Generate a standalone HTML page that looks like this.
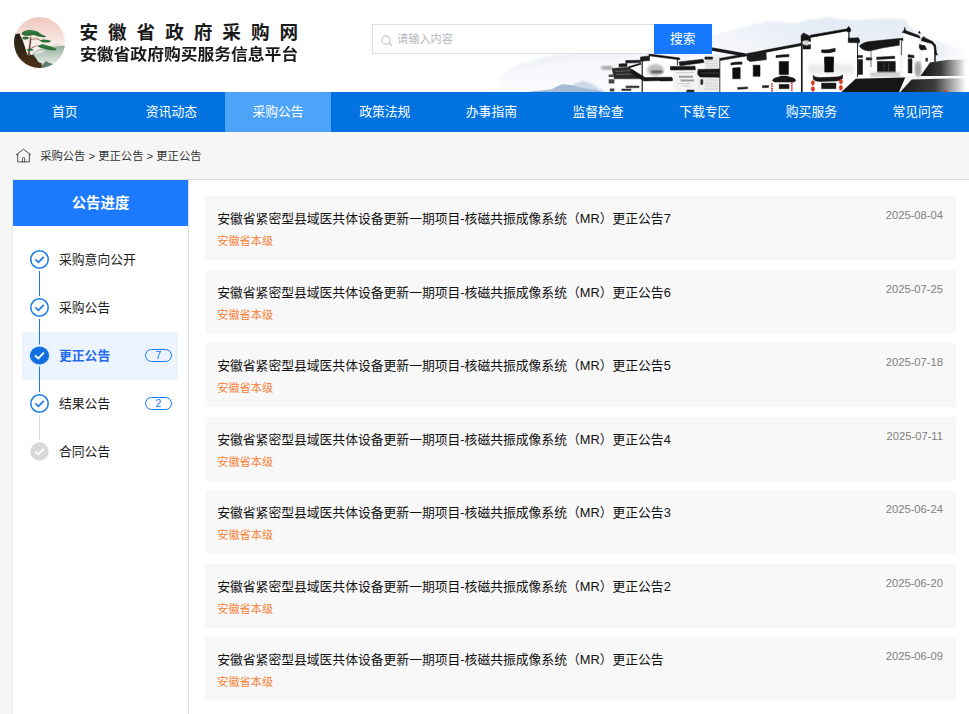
<!DOCTYPE html>
<html lang="zh-CN">
<head>
<meta charset="utf-8">
<title>安徽省政府采购网</title>
<style>
*{box-sizing:border-box;margin:0;padding:0}
html,body{width:969px;height:714px;overflow:hidden;background:#f6f6f6}
body{position:relative;font-family:"Liberation Sans","Noto Sans CJK SC",sans-serif;color:#1a1a1a;-webkit-font-smoothing:antialiased}
.abs{position:absolute}
#header{position:absolute;left:0;top:0;width:969px;height:92px;background:#fff;overflow:hidden}
#t1{position:absolute;left:79.4px;top:20px;font-size:18.6px;font-weight:700;letter-spacing:10px;line-height:26px;color:#1a1a1a;white-space:nowrap}
#t2{transform:scaleY(0.935);transform-origin:0 50%;position:absolute;left:80px;top:43.8px;font-size:16.8px;font-weight:700;line-height:22px;color:#1a1a1a;white-space:nowrap}
#search{position:absolute;left:372px;top:24px;width:283px;height:30px;border:1px solid #dcdfe6;background:#fff;border-right:none}
#search .ph{position:absolute;left:24px;top:0;line-height:28px;font-size:11.2px;color:#b4b8bf}
#sbtn{position:absolute;left:654px;top:24px;width:57.5px;height:30px;background:#1677ff;color:#fff;font-size:12.8px;line-height:29.5px;text-align:center}
#nav{position:absolute;left:0;top:92px;width:969px;height:40px;background:#0073e0}
#nav .it{position:absolute;top:0;height:40px;width:106.67px;line-height:39px;text-align:center;color:#fff;font-size:12.8px}
#nav .it.on{background:#4da3f7}
#crumb{position:absolute;left:40.2px;top:146.4px;font-size:11.3px;line-height:20px;color:#333;white-space:nowrap}
#side{position:absolute;left:12px;top:179px;width:177px;height:540px;background:#fff;border:1px solid #ebe6df;border-right:1px solid #dcdcdc}
#side .hd{position:absolute;left:0;top:0;width:175px;height:46px;background:#1b7aff;color:#fff;font-weight:700;font-size:14.4px;line-height:46px;text-align:center}
#main{position:absolute;left:189px;top:179px;width:780px;height:540px;background:#fff;border-top:1px solid #dcdcdc}
.step{position:absolute;left:0;width:175px;height:48px}
.step .tx{position:absolute;left:46px;top:0;line-height:48px;font-size:12.8px;color:#1a1a1a;white-space:nowrap}
.step svg{position:absolute;left:17px;top:14.3px}
.badge{position:absolute;left:132px;top:17px;width:27px;height:13px;border:1px solid #1677ff;border-radius:7px;color:#1677ff;font-size:10.4px;line-height:11px;text-align:center}
.row{position:absolute;left:16.2px;width:750.8px;height:64px;background:#f8f8f8}
.row .tt{position:absolute;left:12px;top:13.5px;font-size:12.8px;line-height:18px;color:#111;white-space:nowrap}
.row .rg{position:absolute;left:12px;top:37.7px;font-size:11.2px;line-height:14px;color:#f97f36;white-space:nowrap}
.row .dt{position:absolute;right:13px;top:12px;font-size:11.2px;line-height:14px;color:#808080;white-space:nowrap}
</style>
</head>
<body>
<div id="header">
  <svg class="abs" style="left:480px;top:0" width="489" height="92" viewBox="480 0 489 92">
    <defs>
      <linearGradient id="mtA" x1="0" y1="0" x2="0" y2="1"><stop offset="0" stop-color="#e3eaf4"/><stop offset="0.45" stop-color="#edf1f7"/><stop offset="1" stop-color="#f8fafc"/></linearGradient>
      <linearGradient id="mtB" x1="0" y1="0" x2="0" y2="1"><stop offset="0" stop-color="#e9eef5"/><stop offset="0.7" stop-color="#f3f6fa"/><stop offset="1" stop-color="#fbfcfd"/></linearGradient>
      <linearGradient id="fadeR" x1="0" y1="0" x2="1" y2="0"><stop offset="0" stop-color="#fff" stop-opacity="0"/><stop offset="1" stop-color="#fff" stop-opacity="1"/></linearGradient>
      <linearGradient id="fadeL" x1="0" y1="0" x2="1" y2="0"><stop offset="0" stop-color="#fff" stop-opacity="0.6"/><stop offset="1" stop-color="#fff" stop-opacity="0"/></linearGradient>
      <linearGradient id="rfR" gradientUnits="userSpaceOnUse" x1="920" y1="0" x2="966" y2="0"><stop offset="0" stop-color="#151515"/><stop offset="0.45" stop-color="#3a3a3a"/><stop offset="0.8" stop-color="#b5b5b5"/><stop offset="1" stop-color="#ffffff"/></linearGradient>
      <linearGradient id="rfR2" gradientUnits="userSpaceOnUse" x1="903" y1="0" x2="966" y2="0"><stop offset="0" stop-color="#1d1d1d"/><stop offset="0.5" stop-color="#3c3c3c"/><stop offset="0.85" stop-color="#c4c4c4"/><stop offset="1" stop-color="#ffffff"/></linearGradient>
      <filter id="b1" x="-5%" y="-20%" width="110%" height="140%"><feGaussianBlur stdDeviation="1.6"/></filter>
      <filter id="b2" x="-5%" y="-20%" width="110%" height="140%"><feGaussianBlur stdDeviation="0.8"/></filter>
      <filter id="b3" x="-2%" y="-5%" width="104%" height="110%"><feTurbulence type="fractalNoise" baseFrequency="0.8" numOctaves="2" seed="4" result="n"/><feDisplacementMap in="SourceGraphic" in2="n" scale="1.3" xChannelSelector="R" yChannelSelector="G"/><feGaussianBlur stdDeviation="0.3"/></filter>
    </defs>
    <!-- mist / mountains -->
    <path d="M500 76 L512 68 L523 63.5 L543 57.4 L556 54.3 L580 52 L620 50 L660 48 L700 44 L712 36 L726 31.5 L740 28 L756 24 L769 21 L783 22.6 L795 23.6 L807 20 L820 18.7 L828 17 L838 19.3 L857 20.6 L869 19.3 L888 18.5 L904 19 L909 25.5 L919 34 L934 40 L947 44.5 L962 49.5 L967 60 L967 92 L500 92 Z" fill="url(#mtA)" filter="url(#b2)"/>
    <path d="M480 92 L500 80 L520 70 L560 62 L640 56 L720 56 L720 92 Z" fill="#fbfcfe" opacity="0.55" filter="url(#b1)"/>
    <path d="M566 92 L574 84 L584 80.5 L592 84 L600 89 L606 92 Z" fill="#cdd8e7" filter="url(#b2)"/>
    <path d="M527 92 L540 90.4 L551.5 89.2 L557 86.6 L562 84.2 L567 84.4 L572 85.2 L579 87 L585 88.4 L595 89.6 L604 92 Z" fill="#a8bbd4" filter="url(#b3)"/>
    <rect x="940" y="10" width="29" height="82" fill="url(#fadeR)"/>
    <rect x="690" y="10" width="120" height="60" fill="url(#fadeL)"/>
    <g filter="url(#b3)">
      <!-- far-left small house -->
      <path d="M601 66.4 L612 66 L612 69.6 L602 69.4 Z" fill="#9a9a9a" filter="url(#b2)"/>
      <path d="M614.4 79 L643 79 L643 92 L614.4 92 Z" fill="#fff"/>
      <path d="M612 68.4 L628.6 67.2 L644.5 78.8 L614.4 78.8 Z" fill="#2b2b2b" stroke="#2b2b2b" stroke-width="0.55" stroke-linejoin="round"/>
      <path d="M615 71.5 L630 70.6 M616 74.6 L634 73.8" stroke="#6b6b6b" stroke-width="0.8" fill="none"/>
      <path d="M608.7 74.6 H613.8 V77 H608.7 Z M608.7 79.2 H614.4 V83.6 H608.7 Z M609.8 88.6 H614.4 V91.4 H609.8 Z" fill="#4a4a4a"/>
      <path d="M626 86 H639 V87.8 H626 Z M621.8 89 H631 V90.6 H621.8 Z" fill="#333" stroke="#333" stroke-width="0.55" stroke-linejoin="round"/>
      <path d="M619 64 L627 63.6 L627 66.4 L619 66.8 Z M625.8 60.6 L640.5 60.2 L640.5 62.6 L625.8 63 Z" fill="#1c1c1c" stroke="#1c1c1c" stroke-width="0.55" stroke-linejoin="round"/>
      <path d="M628.6 67.4 L641 63.6" stroke="#1c1c1c" stroke-width="1.8"/>
      <!-- stepped gable house -->
      <path d="M642.4 61 L649.4 55.4 L677.6 58.8 L677.6 79 L644.5 79 L642.4 76 Z" fill="#fff"/>
      <path d="M640.5 57 L649.6 56 L649.6 60.6 L640.5 61.2 Z" fill="#1a1a1a" stroke="#1a1a1a" stroke-width="0.55" stroke-linejoin="round"/>
      <path d="M649 54 L679.8 58 L679.6 59.8 L649 55.8 Z" fill="#111" stroke="#111" stroke-width="0.55" stroke-linejoin="round"/>
      <path d="M642.2 61 V92" stroke="#1c1c1c" stroke-width="1.2"/>
      <ellipse cx="655.5" cy="70" rx="8.5" ry="6" fill="#bdbdbd" filter="url(#b2)"/>
      <path d="M651.3 70.6 H662.6 V72.9 H651.3 Z" fill="#3a3a3a" filter="url(#b2)"/>
      <path d="M643.3 81 H673 V92 H643.3 Z" fill="#fff"/>
      <path d="M632 69.6 L645 77.6 L671.8 77.2 L671.8 80.2 L644 81 L630.6 72.6 Z" fill="#151515" stroke="#151515" stroke-width="0.55" stroke-linejoin="round"/>
      <!-- middle low roofs -->
      <path d="M673 70 H697 V92 H673 Z" fill="#f3f3f3"/>
      <path d="M704.5 55 H720.3 V92 H697 V69 H704.5 Z" fill="#ececec"/>
      <path d="M677.4 58 V65" stroke="#222" stroke-width="1"/>
      <path d="M679 62 L703 59.2 L704.2 62.4 L680 65.8 Z" fill="#161616" stroke="#161616" stroke-width="0.55" stroke-linejoin="round"/>
      <path d="M670.3 66.4 L695 66.2 L695.4 69.8 L670.6 70 Z" fill="#161616" stroke="#161616" stroke-width="0.55" stroke-linejoin="round"/>
      <path d="M679 75.8 H693 V77.8 H679 Z M680.6 79.6 H694 V81.4 H680.6 Z" fill="#9b9b9b"/>
      <path d="M676 72.6 H694 M677 83.6 H690 M682 86 H690" stroke="#c4c4c4" stroke-width="0.8" fill="none"/>
      <path d="M686.8 90 H694 V92 H686.8 Z" fill="#2c2c2c" stroke="#2c2c2c" stroke-width="0.55" stroke-linejoin="round"/>
      <path d="M704.9 57 H712.6 V59.2 H704.9 Z" fill="#1d1d1d" stroke="#1d1d1d" stroke-width="0.55" stroke-linejoin="round"/>
      <path d="M698.2 69.4 L719.9 69 L719.9 77.2 L700 77 L697.6 74 Z" fill="#171717" stroke="#171717" stroke-width="0.55" stroke-linejoin="round"/>
      <path d="M701 73 H719" stroke="#4e4e4e" stroke-width="0.7"/>
      <path d="M700.8 79.7 H702.8 V84.4 H700.8 Z" fill="#222" stroke="#222" stroke-width="0.55" stroke-linejoin="round"/>
      <path d="M706 61 H718 M705 63.6 H718 M706 66 H718 M706 80 H718 M705 83 H718 M706 86 H718 M704 89 H718" stroke="#cdcdcd" stroke-width="0.9" fill="none"/>
      <path d="M660 78.4 L672.4 78.2 L672.4 80.8 L660 81 Z" fill="#151515" stroke="#151515" stroke-width="0.55" stroke-linejoin="round"/>
      <!-- three-window house -->
      <path d="M720.3 59.6 L747 55.3 L801.5 45.4 L801.5 92 L720.3 92 Z" fill="#fff"/>
      <path d="M712.3 47.8 L744.8 53.6 L744.4 56.2 L712 50.4 Z" fill="#141414" stroke="#141414" stroke-width="0.55" stroke-linejoin="round"/>
      <path d="M719.6 58.4 L748 53.4 L801.6 43.2 L802 45.4 L748.4 55.6 L720 60.6 Z" fill="#141414" stroke="#141414" stroke-width="0.55" stroke-linejoin="round"/>
      <path d="M747 54 L766 52.6 L766.4 59.6 L750 61.6 L747 59.4 Z" fill="#1c1c1c" stroke="#1c1c1c" stroke-width="0.55" stroke-linejoin="round"/>
      <path d="M719.8 60 V92" stroke="#333" stroke-width="0.9"/>
      <path d="M730.9 63 Q736 61.6 742 62 L742 64.2 Q736 64 730.9 65 Z" fill="#161616" stroke="#161616" stroke-width="0.55" stroke-linejoin="round"/>
      <path d="M732.7 68 L740.2 67.4 L740.2 78.8 L732.7 78.8 Z" fill="#111" stroke="#111" stroke-width="0.55" stroke-linejoin="round"/>
      <path d="M753.2 65.2 H760 V76.3 H753.2 Z" fill="#111" stroke="#111" stroke-width="0.55" stroke-linejoin="round"/>
      <path d="M776 55.6 Q783 54.6 789 54.6 L789 56.8 Q783 57 776 57.6 Z" fill="#161616" stroke="#161616" stroke-width="0.55" stroke-linejoin="round"/>
      <path d="M779.2 61.5 H788.5 V74.5 H779.2 Z" fill="#111" stroke="#111" stroke-width="0.55" stroke-linejoin="round"/>
      <path d="M772.4 80.4 Q774 77.4 778 77.2 L781 76 L787 76 L790 77.2 Q794.4 77.4 795.9 80.4 L794 82 L774.4 82 Z" fill="#141414" stroke="#141414" stroke-width="0.55" stroke-linejoin="round"/>
      <path d="M779.2 84.4 H789 V88.7 H779.2 Z" fill="#161616" stroke="#161616" stroke-width="0.55" stroke-linejoin="round"/>
      <path d="M772 83.2 V91.4 M791.8 82.6 V91.4" stroke="#d8352b" stroke-width="1.7" stroke-dasharray="1.6 0.7"/>
      <path d="M737.7 87.5 L747.6 86.9 L747.6 88.7 L737.7 89.3 Z M762.4 85.8 L768.6 85.5 L768.6 87.4 L762.4 87.8 Z" fill="#222" stroke="#222" stroke-width="0.55" stroke-linejoin="round"/>
      <!-- main tall house -->
      <path d="M802.4 42 L810.5 37 L849 30.4 L849 41 L857.6 41 L857.6 92 L802.4 92 Z" fill="#fff"/>
      <path d="M801.2 35.2 L803.4 33 L810.5 36.4 L810.5 41.6 L801.2 40.6 Z M803 44.7 H810.5 V49 H803 Z" fill="#161616" stroke="#161616" stroke-width="0.55" stroke-linejoin="round"/>
      <path d="M804.4 40.4 H808.6 V45.4 H804.4 Z" fill="#cfcfcf"/>
      <path d="M801.8 36 V92" stroke="#1c1c1c" stroke-width="1.7"/>
      <path d="M810.3 35.2 L849.4 28.4 L849.8 30.4 L810.7 37.4 Z" fill="#111" stroke="#111" stroke-width="0.55" stroke-linejoin="round"/>
      <path d="M847 29 L848.6 26.4 L850.7 29 L850.4 31.8 L847.2 31.8 Z" fill="#111" stroke="#111" stroke-width="0.55" stroke-linejoin="round"/>
      <path d="M848.9 31 V41" stroke="#1a1a1a" stroke-width="1.2"/>
      <path d="M848.3 38.2 L858.4 37.8 L859.6 40.2 L859.4 42.8 L848.3 42.6 Z" fill="#161616" stroke="#161616" stroke-width="0.55" stroke-linejoin="round"/>
      <path d="M857.6 42.8 V77" stroke="#222" stroke-width="1.1"/>
      <path d="M821.6 49.8 Q828 50.6 835.2 48.2 L835.2 51.4 Q828 53.6 821.6 52.6 Z" fill="#141414" stroke="#141414" stroke-width="0.55" stroke-linejoin="round"/>
      <path d="M824.7 57.1 H833.4 V72 H824.7 Z" fill="#111" stroke="#111" stroke-width="0.55" stroke-linejoin="round"/>
      <rect x="808" y="64" width="46" height="10" fill="#ededed" filter="url(#b1)"/>
      <path d="M824.7 57.1 H833.4 V72 H824.7 Z" fill="#111" stroke="#111" stroke-width="0.55" stroke-linejoin="round"/>
      <path d="M813 75.4 Q815 77.4 820 77.6 L836 77 Q841 76.8 842.7 74.8 L842.4 78.6 Q841 80.8 836 81 L820 81.4 Q815 81.2 813.4 79.4 Z" fill="#141414" stroke="#141414" stroke-width="0.55" stroke-linejoin="round"/>
      <path d="M821.6 83.1 H835.9 V88.7 H821.6 Z" fill="#151515" stroke="#151515" stroke-width="0.55" stroke-linejoin="round"/>
      <ellipse cx="812.9" cy="82.8" rx="1.9" ry="2.6" fill="#de3b27"/><ellipse cx="812.9" cy="89" rx="1.9" ry="2.7" fill="#de3b27"/>
      <ellipse cx="840.9" cy="81.6" rx="1.9" ry="2.6" fill="#de3b27"/><ellipse cx="840.9" cy="87.8" rx="1.9" ry="2.7" fill="#de3b27"/>
      <!-- third house -->
      <path d="M858.2 47 H909 V78 H858.2 Z" fill="#fff"/>
      <path d="M859.4 46 Q863 42.4 869.3 41.6 L894 39 L906.4 37.9 L908.6 42 L900 45 L882 48 L869.3 51 Q862 50.6 859.4 46 Z" fill="#191919" stroke="#191919" stroke-width="0.55" stroke-linejoin="round"/>
      <path d="M858.2 59.6 H862.5 V74.4 H858.2 Z" fill="#141414" stroke="#141414" stroke-width="0.55" stroke-linejoin="round"/>
      <path d="M857.6 55.4 H862.5 V57.6 H857.6 Z M866.2 57.7 H871.8 V60 H866.2 Z" fill="#1c1c1c" stroke="#1c1c1c" stroke-width="0.55" stroke-linejoin="round"/>
      <path d="M871 51 V67" stroke="#555" stroke-width="0.8"/>
      <path d="M876.7 57.2 L894.7 56.2 L894.7 58.4 L876.7 59.4 Z" fill="#161616" stroke="#161616" stroke-width="0.55" stroke-linejoin="round"/>
      <path d="M877.4 61.4 H895.3 V72.6 H877.4 Z" fill="#141414" stroke="#141414" stroke-width="0.55" stroke-linejoin="round"/>
      <path d="M884 63 V71 M888.6 63 V71" stroke="#666" stroke-width="0.6"/>
      <rect x="870" y="72" width="40" height="5" fill="#cfcfcf" filter="url(#b2)"/>
      <!-- right gables -->
      <path d="M899.6 40 L908.6 42.6 L908.6 76.6 L899.6 76.6 Z" fill="#f4f4f4"/>
      <path d="M903.2 32 L919.3 37 L919.3 76.6 L903.2 76.6 Z" fill="#fff"/>
      <path d="M901.8 32.6 L903.8 30.6 L904.8 26.9 L905.8 30.4 L919.2 35.6 L920.4 38.4 L919 38 L903.4 32.8 Z" fill="#131313" stroke="#131313" stroke-width="0.25" stroke-linejoin="round"/>
      <path d="M918.4 33 L919.4 31 L920.4 33.4 Z" fill="#131313" stroke="#131313" stroke-width="0.55" stroke-linejoin="round"/>
      <path d="M901.4 41 V55" stroke="#444" stroke-width="0.9"/>
      <path d="M908 54.8 L914 55.4 L914 57.8 L908 57.2 Z" fill="#1a1a1a" stroke="#1a1a1a" stroke-width="0.55" stroke-linejoin="round"/>
      <path d="M908.2 58.8 H912 V73 H908.2 Z" fill="#161616" stroke="#161616" stroke-width="0.55" stroke-linejoin="round"/>
      <path d="M921.6 41 L934.6 44 L934.6 66 L921.6 70 Z" fill="#fff"/>
      <path d="M921.6 38.8 L923.8 36.4 L925 38 L932.6 41.6 L935.4 45 L936.6 53 L937.6 54.8 L935.2 55 L934 46.4 L931.6 43.6 L921.6 40.8 Z" fill="#131313" stroke="#131313" stroke-width="0.55" stroke-linejoin="round"/>
      <path d="M935 45 V62.4" stroke="#1c1c1c" stroke-width="1.5"/>
      <path d="M919.3 44.6 L925 45.8 L926.6 49.6 L921 49.9 L919.3 48 Z" fill="#181818" stroke="#181818" stroke-width="0.55" stroke-linejoin="round"/>
      <path d="M925.8 58.2 H927.6 V61.2 H925.8 Z" fill="#222" stroke="#222" stroke-width="0.55" stroke-linejoin="round"/>
      <ellipse cx="918" cy="69" rx="3.6" ry="8" fill="#a5a5a5" filter="url(#b2)"/>
      <!-- dark roofs bottom right -->
      <path d="M841.4 92 L855.7 78.8 L905.2 77.5 L899 92 Z" fill="#141414"/>
      <path d="M920.5 76 L930 62.6 L946.6 60 L966 59.4 L966 76 Z" fill="url(#rfR)"/>
      <path d="M900.3 92 L911.6 79.4 L966 78 L966 92 Z" fill="url(#rfR2)"/>
      <circle cx="946" cy="91.4" r="1.3" fill="#d8452f"/>
    </g>
  </svg>
  <svg class="abs" style="left:14.2px;top:16.7px" width="51" height="51" viewBox="0 0 100 100">
    <defs>
      <clipPath id="lc"><circle cx="50" cy="50" r="50"/></clipPath>
      <linearGradient id="lsky" x1="0" y1="0" x2="0" y2="1"><stop offset="0" stop-color="#eec8be"/><stop offset="0.35" stop-color="#f6dfd8"/><stop offset="0.6" stop-color="#fbf3f0"/><stop offset="1" stop-color="#ffffff"/></linearGradient>
      <linearGradient id="lmt" x1="0" y1="0" x2="0" y2="1"><stop offset="0" stop-color="#94ad9c"/><stop offset="0.55" stop-color="#c9d7cd"/><stop offset="1" stop-color="#e9efea"/></linearGradient>
      <linearGradient id="lrock" x1="0" y1="0" x2="0" y2="1"><stop offset="0" stop-color="#28251a"/><stop offset="0.5" stop-color="#352814"/><stop offset="1" stop-color="#4e3117"/></linearGradient>
      <filter id="lb" x="-10%" y="-10%" width="120%" height="120%"><feGaussianBlur stdDeviation="1.2"/></filter>
    </defs>
    <g clip-path="url(#lc)">
      <rect width="100" height="100" fill="url(#lsky)"/>
      <path d="M66 58 L76 54.5 L86 52.4 L93 54.5 L100 56.5 L100 64 L66 64 Z" fill="#e6e0d6" filter="url(#lb)"/>
      <path d="M36 70 L46 64 L55 61.5 L72 60 L86 57.5 L100 56.5 L100 100 L36 100 Z" fill="url(#lmt)"/>
      <path d="M40 70 Q50 62 62 66 Q56 71 44 73 Z" fill="#f4f6f3" opacity="0.6" filter="url(#lb)"/>
      <path d="M52 98 L58 91 L63 86.5 L68 89.5 L76 92 L84 95 L84 100 L52 100 Z" fill="#5f7d69"/>
      <path d="M0 33 L2.5 32.6 L6 33.4 L10.6 32 L12 36 L13.8 39.5 L15.5 42 L17.4 47 L19.5 53 L21.5 59 L23.2 64.5 L25 70 L26.5 74.5 L30 75.5 L33 73.2 L35 74.8 L37.7 73.4 L40 77 L43.5 81.6 L45.5 85 L47.4 87.6 L50.5 89.6 L54.4 90.5 L54.4 100 L0 100 Z" fill="url(#lrock)"/>
      <path d="M27.3 75 L29 62 L30.8 50 L32 39.5 L33.6 39.5 L33 50 L31.6 62 L30.6 75 Z" fill="#5f4034" stroke="#5f4034" stroke-width="0.8"/>
      <path d="M30 63.5 Q36 58 43 56.5 Q48 55.3 53 55.2 L53 56.6 Q47 56.8 43 58 Q36 60 31 65 Z" fill="#8a6450"/>
      <path d="M32.5 43.5 Q40 41.5 46 42.4 Q50 43.5 52 46 L51 46.8 Q48 44.3 45 43.8 Q39 43.2 32.8 45 Z" fill="#8a6450"/>
      <g fill="#2a6f37">
        <path d="M14.5 33.5 Q16 29.5 20.5 27.6 Q26 25 32 25.4 Q40 25.6 45.5 28.6 Q50 31.5 55 35 Q60 36.6 63.2 38.4 Q61 40.6 57 39.6 Q52 38.6 47.4 38 Q42 36 37.7 35.2 Q33 36.5 30 37 Q25 37 20.3 36.2 Q16.5 35.5 14.5 33.5 Z"/>
        <path d="M16.4 40.4 Q19.5 38.2 23.2 38 Q27 38.8 30 41 Q27.5 43.6 24 44 Q20 44.2 17.4 43 Z"/>
        <path d="M50 46 Q54 44 59 44 Q66 44.6 72.6 46.8 Q71 49.6 68.7 49.8 Q63 50.4 58 49.8 Q53 48.6 50 46 Z"/>
        <path d="M46.4 57.6 Q50 54.4 55 53.6 Q61 54.4 66.7 56.5 Q73 58 78.3 60.3 Q82 61.6 84.2 63.4 Q82 65.4 78.3 65.3 Q72 65.2 66.7 64.2 Q61 63 57 61.3 Q52 60.6 49.3 59.5 Z"/>
        <path d="M24.2 64.4 Q27 62.4 30 62.3 Q35 62.6 39.6 64.2 Q37 66 33.8 66.2 Q29 66.6 26 65.9 Z"/>
      </g>
      <g fill="#4a9150" opacity="0.5">
        <path d="M20 30 Q26 26.6 33 27.2 Q40 27.6 45 30.5 Q38 29.6 33 30.4 Q26 30 20 30 Z"/>
        <path d="M52 55.6 Q58 55 66 58 Q73 60 79 62 Q71 61 66 60.4 Q58 58.4 52 55.6 Z"/>
        <path d="M53 45.6 Q60 44.8 68 46.8 Q60 46.8 53 45.6 Z"/>
      </g>
    </g>
  </svg>
  <div id="t1">安徽省政府采购网</div>
  <div id="t2">安徽省政府购买服务信息平台</div>
  <div id="search">
    <svg class="abs" style="left:8px;top:9.6px" width="12" height="12" viewBox="0 0 12 12"><circle cx="5" cy="5" r="4.1" fill="none" stroke="#c0c5cf" stroke-width="1.1"/><path d="M8 8 L11 11" stroke="#c0c5cf" stroke-width="1.1" fill="none"/></svg>
    <span class="ph">请输入内容</span>
  </div>
  <div id="sbtn">搜索</div>
</div>
<div id="nav">
  <div class="it" style="left:11.40px">首页</div>
  <div class="it" style="left:118.07px">资讯动态</div>
  <div class="it on" style="left:224.73px">采购公告</div>
  <div class="it" style="left:331.40px">政策法规</div>
  <div class="it" style="left:438.07px">办事指南</div>
  <div class="it" style="left:544.73px">监督检查</div>
  <div class="it" style="left:651.40px">下载专区</div>
  <div class="it" style="left:758.07px">购买服务</div>
  <div class="it" style="left:864.73px">常见问答</div>
</div>
<svg class="abs" style="left:15px;top:147px" width="17" height="16" viewBox="0 0 17 16"><path d="M1.3 7.8 L8.5 2.2 L15.7 7.8 M2.7 7 V14.9 H14.3 V7 M7.5 14.9 V11.6 Q7.5 10.5 8.6 10.5 Q9.7 10.5 9.7 11.6 V14.9" fill="none" stroke="#3a3a3a" stroke-width="0.9" stroke-linejoin="round" stroke-linecap="round"/></svg>
<div id="crumb">采购公告 &gt; 更正公告 &gt; 更正公告</div>
<div id="side">
  <div class="hd">公告进度</div>
  <div class="abs" style="left:26px;top:91px;width:1px;height:25px;background:#1a7ae8"></div>
  <div class="abs" style="left:26px;top:139px;width:1px;height:25px;background:#1a7ae8"></div>
  <div class="abs" style="left:26px;top:187px;width:1px;height:25px;background:#1a7ae8"></div>
  <div class="abs" style="left:26px;top:235px;width:1px;height:25px;background:#d9d9d9"></div>
  <div class="step" style="top:56px"><svg width="19" height="19" viewBox="0 0 19 19"><circle cx="9.5" cy="9.5" r="8.7" fill="#fff" stroke="#1a7ae8" stroke-width="1.5"/><path d="M5.2 9.4 L8.4 12.4 L13.8 6.8" fill="none" stroke="#1a7ae8" stroke-width="1.7"/></svg><span class="tx">采购意向公开</span></div>
  <div class="step" style="top:104px"><svg width="19" height="19" viewBox="0 0 19 19"><circle cx="9.5" cy="9.5" r="8.7" fill="#fff" stroke="#1a7ae8" stroke-width="1.5"/><path d="M5.2 9.4 L8.4 12.4 L13.8 6.8" fill="none" stroke="#1a7ae8" stroke-width="1.7"/></svg><span class="tx">采购公告</span></div>
  <div class="abs" style="left:9px;top:152px;width:156px;height:48px;background:#ecf5ff"></div>
  <div class="abs" style="left:26px;top:152px;width:1px;height:48px;background:#1a7ae8"></div>
  <div class="step" style="top:152px"><svg width="25" height="25" viewBox="0 0 25 25" style="left:14px;top:11.4px"><ellipse cx="12.5" cy="12.5" rx="11.6" ry="11" fill="#e6f0fd"/><ellipse cx="12.5" cy="12.5" rx="9.65" ry="9" fill="#1270e2"/><path d="M8 12.5 L11.3 15.5 L16.9 9.7" fill="none" stroke="#fff" stroke-width="1.8"/></svg><span class="tx" style="color:#2469f0;font-weight:700">更正公告</span><span class="badge">7</span></div>
  <div class="step" style="top:200px"><svg width="19" height="19" viewBox="0 0 19 19"><circle cx="9.5" cy="9.5" r="8.7" fill="#fff" stroke="#1a7ae8" stroke-width="1.5"/><path d="M5.2 9.4 L8.4 12.4 L13.8 6.8" fill="none" stroke="#1a7ae8" stroke-width="1.7"/></svg><span class="tx">结果公告</span><span class="badge">2</span></div>
  <div class="step" style="top:248px"><svg width="19" height="19" viewBox="0 0 19 19"><circle cx="9.5" cy="9.5" r="9.2" fill="#d9d9d9"/><path d="M5.2 9.4 L8.4 12.4 L13.8 6.8" fill="none" stroke="#fff" stroke-width="1.7"/></svg><span class="tx">合同公告</span></div>
</div>
<div id="main">
  <div class="row" style="top:16px"><div class="tt">安徽省紧密型县域医共体设备更新一期项目-核磁共振成像系统（MR）更正公告7</div><div class="rg">安徽省本级</div><div class="dt">2025-08-04</div></div>
  <div class="row" style="top:90px"><div class="tt">安徽省紧密型县域医共体设备更新一期项目-核磁共振成像系统（MR）更正公告6</div><div class="rg">安徽省本级</div><div class="dt">2025-07-25</div></div>
  <div class="row" style="top:163px"><div class="tt">安徽省紧密型县域医共体设备更新一期项目-核磁共振成像系统（MR）更正公告5</div><div class="rg">安徽省本级</div><div class="dt">2025-07-18</div></div>
  <div class="row" style="top:237px"><div class="tt">安徽省紧密型县域医共体设备更新一期项目-核磁共振成像系统（MR）更正公告4</div><div class="rg">安徽省本级</div><div class="dt">2025-07-11</div></div>
  <div class="row" style="top:310px"><div class="tt">安徽省紧密型县域医共体设备更新一期项目-核磁共振成像系统（MR）更正公告3</div><div class="rg">安徽省本级</div><div class="dt">2025-06-24</div></div>
  <div class="row" style="top:384px"><div class="tt">安徽省紧密型县域医共体设备更新一期项目-核磁共振成像系统（MR）更正公告2</div><div class="rg">安徽省本级</div><div class="dt">2025-06-20</div></div>
  <div class="row" style="top:457px"><div class="tt">安徽省紧密型县域医共体设备更新一期项目-核磁共振成像系统（MR）更正公告</div><div class="rg">安徽省本级</div><div class="dt">2025-06-09</div></div>
</div>
</body>
</html>
